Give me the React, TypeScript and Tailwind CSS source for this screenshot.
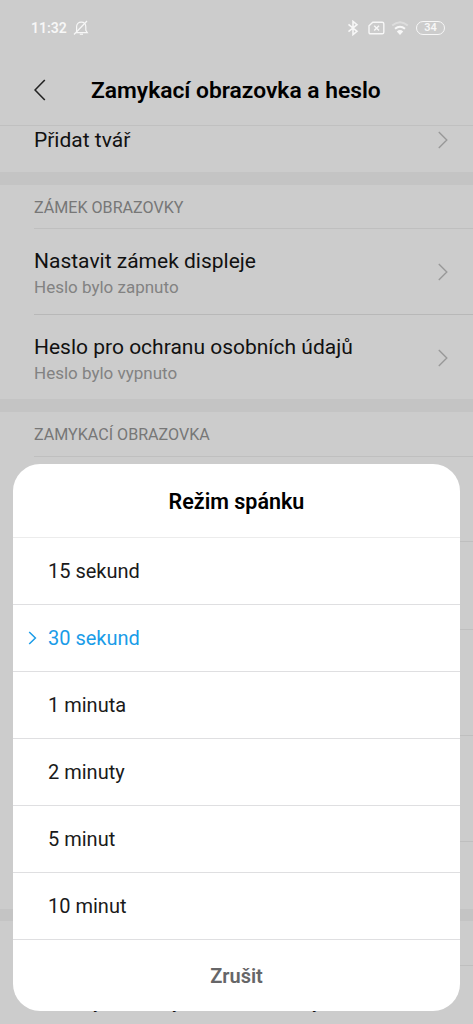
import React from 'react';

const options = ['15 sekund', '30 sekund', '1 minuta', '2 minuty', '5 minut', '10 minut'];
const selected = '30 sekund';

const Chevron = () => (
  <svg className="w-[10px] h-[18px] shrink-0" viewBox="0 0 10 18" fill="none" stroke="#999999" strokeWidth="1.4">
    <path d="M0.8 1 L8.8 9 L0.8 17" />
  </svg>
);

const Row = ({ title, subtitle }: { title: string; subtitle: string }) => (
  <div className="h-full flex items-center justify-between pr-[25px]">
    <div className="pt-[4px]">
      <div className="text-[21px] leading-[26px] text-[#111111] whitespace-nowrap">{title}</div>
      <div className="text-[17px] leading-[26px] text-[#828282]">{subtitle}</div>
    </div>
    <Chevron />
  </div>
);

const StatusBar = () => (
  <div className="h-[55px] flex items-center justify-between pl-[31px] pr-[28px] text-[#f7f7f7]">
    <div className="flex items-center gap-[6px]">
      <span className="text-[14px] font-semibold leading-none">11:32</span>
      <svg className="w-[16px] h-[16px]" viewBox="0 0 16 16" fill="none" stroke="currentColor" strokeWidth="1.2">
        <path d="M3.6 12 V6.8 C3.6 3.9 5.4 2.1 8.3 2.1 C11.2 2.1 12.8 3.9 12.8 6.8 V10.4 L14.3 12.6 H3" />
        <path d="M6.8 14.2 H10" />
        <path d="M14 1 L1 14.5" />
      </svg>
    </div>
    <div className="flex items-center">
      <svg className="w-[12px] h-[16px]" viewBox="0 0 12 16" fill="none" stroke="currentColor" strokeWidth="1.6">
        <path d="M1.5 4.4 L10 11.3 L6 14.6 V1.4 L10 4.7 L1.5 11.6" />
      </svg>
      <svg className="w-[17px] h-[14px] ml-[9px]" viewBox="0 0 17 14" fill="none" stroke="currentColor" strokeWidth="1.4">
        <path d="M4.8 1.2 H14.2 Q15.8 1.2 15.8 2.8 V11.2 Q15.8 12.8 14.2 12.8 H2.6 Q1 12.8 1 11.2 V4.8 Z" />
        <path d="M6.2 4.8 L11 9.4 M11 4.8 L6.2 9.4" />
      </svg>
      <svg className="w-[18px] h-[14px] ml-[6px]" viewBox="0 0 18 14" fill="none" stroke="currentColor" strokeWidth="2">
        <path d="M1.2 4.6 Q9 -2 16.8 4.6" opacity="0.4" />
        <path d="M4 7.8 Q9 3.6 14 7.8" />
        <path d="M5.8 10.4 Q9 7.8 12.2 10.4 L9 14 Z" fill="currentColor" stroke="none" />
      </svg>
      <div className="w-[29px] h-[14px] ml-[7px] rounded-full border-[1.5px] border-[#f7f7f7] flex items-center justify-center text-[11px] font-semibold leading-none">
        34
      </div>
    </div>
  </div>
);

const App = () => {
  return (
    <div className="relative h-[1024px] overflow-hidden bg-[#cccccc] font-['Roboto',sans-serif]">
      <StatusBar />
      <header className="h-[71px] pl-[34px] flex items-center border-b border-[#c0c0c0]">
        <svg className="w-[12px] h-[22px]" viewBox="0 0 12 22" fill="none" stroke="#222222" strokeWidth="1.6">
          <path d="M10.8 1 L1 11 L10.8 21" />
        </svg>
        <h1 className="ml-[45px] pt-[2px] text-[22.8px] font-semibold text-black whitespace-nowrap">Zamykací obrazovka a heslo</h1>
      </header>

      <main>
        <div className="h-[46px] pl-[34px] pr-[25px] pb-[18px] flex items-center justify-between">
          <span className="text-[21px] leading-[26px] text-[#111111]">Přidat tvář</span>
          <Chevron />
        </div>
        <div className="h-[13px] bg-[#c4c4c4]" />

        <section className="pl-[34px]">
          <h2 className="h-[44px] pt-[3px] flex items-center text-[16.1px] text-[#777777] border-b border-[#bfbfbf]">ZÁMEK OBRAZOVKY</h2>
          <div className="h-[86px] border-b border-[#b8b8b8]">
            <Row title="Nastavit zámek displeje" subtitle="Heslo bylo zapnuto" />
          </div>
          <div className="h-[84px] pt-[2px]">
            <Row title="Heslo pro ochranu osobních údajů" subtitle="Heslo bylo vypnuto" />
          </div>
        </section>
        <div className="h-[13px] bg-[#c4c4c4]" />

        <section className="pl-[34px]">
          <h2 className="h-[45px] pt-[2px] flex items-center text-[16.1px] text-[#777777] border-b border-[#bfbfbf]">ZAMYKACÍ OBRAZOVKA</h2>
          <div className="h-[85px] border-b border-[#bfbfbf]" />
          <div className="h-[88px] border-b border-[#bfbfbf]" />
          <div className="h-[106px] border-b border-[#bfbfbf]" />
          <div className="h-[106px] border-b border-[#bfbfbf]" />
          <div className="h-[67px]" />
        </section>
        <div className="h-[12px] bg-[#c4c4c4]" />
        <div className="h-[45px] ml-[34px] border-b border-[#bfbfbf]" />
        {/* only the descenders show under the sheet */}
        <div className="pt-[22px] pl-[93px] flex text-[21px] leading-[26px] text-[#111111]">
          <span className="w-[79px]">y</span>
          <span className="w-[140px]">y</span>
          <span>y</span>
        </div>
      </main>

      {/* Bottom sheet */}
      <div className="absolute left-[13px] top-[464px] w-[447px] h-[547px] rounded-[27px] bg-white overflow-hidden">
        <h3 className="h-[74px] pt-[4px] flex items-center justify-center text-[21.5px] font-semibold text-black border-b border-[#ececec]">
          Režim spánku
        </h3>
        {options.map((option) => (
          <div
            key={option}
            className={`h-[67px] pl-[15px] flex items-center text-[20px] border-b border-[#dfdfe1] ${
              option === selected ? 'text-[#1a9ce8]' : 'text-[#1a1a1a]'
            }`}
          >
            <div className="w-[20px]">
              {option === selected && (
                <svg className="w-[9px] h-[14px]" viewBox="0 0 9 14" fill="none" stroke="currentColor" strokeWidth="1.5">
                  <path d="M1.2 1 L7.4 7 L1.2 13" />
                </svg>
              )}
            </div>
            {option}
          </div>
        ))}
        <div className="h-[71px] flex items-center justify-center text-[20px] font-semibold text-[#666668]">Zrušit</div>
      </div>
    </div>
  );
};

export default App;
